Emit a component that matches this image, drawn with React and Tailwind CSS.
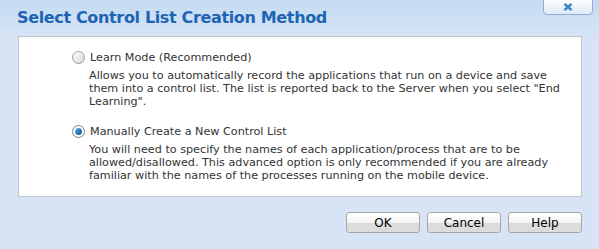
export default function App() {
  const body = { fontFamily: '"DejaVu Sans", Verdana, sans-serif' };
  return (
    <div className="w-[599px] h-[249px] overflow-hidden bg-[#d6e4f5] relative" style={body}>
      <div className="h-[36px] bg-gradient-to-b from-[#c4dbf2] to-[#d6e4f5] flex items-start justify-between">
        <div className="pl-[17px] pt-[6px] text-[16px] font-bold text-[#1d64b4] tracking-[-0.35px]">
          Select Control List Creation Method
        </div>
        <div className="mr-[6px] mt-[-2px] w-[50px] h-[17px] rounded-b-[4px] border border-[#8fb0d4] bg-gradient-to-b from-white to-[#dfeaf6] flex items-center justify-center">
          <svg width="10" height="8" viewBox="0 0 10 8">
            <path d="M1.5 1 L8.5 7 M8.5 1 L1.5 7" stroke="#3c86c8" strokeWidth="2.4" strokeLinecap="butt" />
          </svg>
        </div>
      </div>
      <div className="ml-[18px] w-[564px] h-[161px] bg-white border border-[#c3c6cb] text-[11.2px] leading-[13px] text-[#333]">
        <div className="pl-[53px] pt-[14px]">
          <label className="flex items-center gap-[5px]">
            <span className="w-[13px] h-[13px] rounded-full border border-[#9a9a9a] bg-gradient-to-br from-white to-[#d8d8d8]"></span>
            <span>Learn Mode (Recommended)</span>
          </label>
          <div className="pl-[17px] pt-[5px]">
            Allows you to automatically record the applications that run on a device and save<br />
            them into a control list. The list is reported back to the Server when you select "End<br />
            Learning".
          </div>
          <label className="flex items-center gap-[5px] mt-[17px]">
            <span className="w-[13px] h-[13px] rounded-full border border-[#7d7d7d] bg-white flex items-center justify-center">
              <span className="w-[7px] h-[7px] rounded-full bg-gradient-to-br from-[#5ab4ec] to-[#0b4d8a]"></span>
            </span>
            <span>Manually Create a New Control List</span>
          </label>
          <div className="pl-[17px] pt-[5px]">
            You will need to specify the names of each application/process that are to be<br />
            allowed/disallowed. This advanced option is only recommended if you are already<br />
            familiar with the names of the processes running on the mobile device.
          </div>
        </div>
      </div>
      <div className="flex justify-end gap-[7px] pr-[17px] pt-[15px]">
        {["OK", "Cancel", "Help"].map((t) => (
          <button key={t} className="w-[74px] h-[21px] rounded-[3px] border border-[#a7a7a7] bg-[linear-gradient(#ffffff_0%,#f4f4f4_50%,#dcdcdc_55%,#dcdcdc_100%)] text-[12px] text-black leading-none" style={body}>
            {t}
          </button>
        ))}
      </div>
    </div>
  );
}
